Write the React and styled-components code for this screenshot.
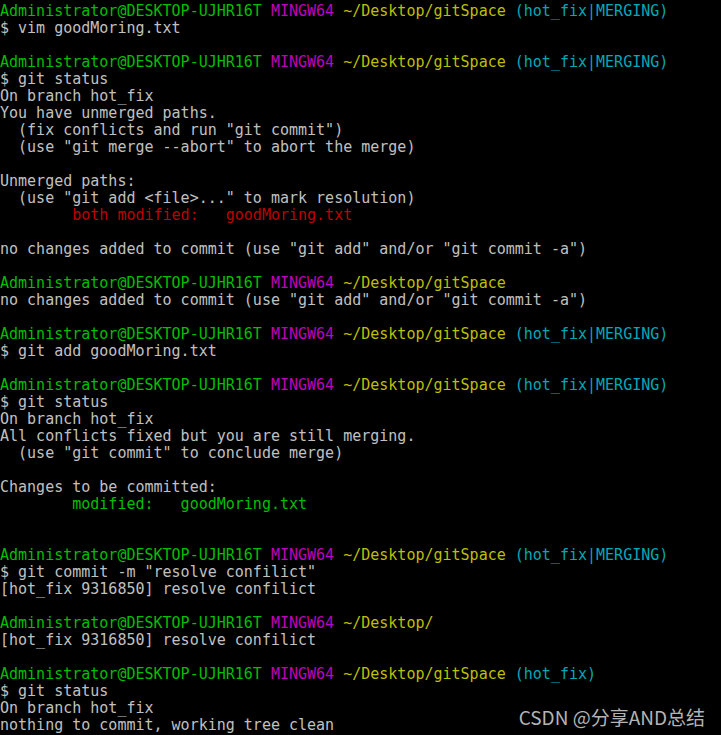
import React from 'react'
import styled, { createGlobalStyle } from 'styled-components'

const GlobalStyle = createGlobalStyle`
    html, body {
        margin: 0;
        padding: 0;
        background: #000;
    }
`

const COLORS = {
    text: '#c0c0c0',
    green: '#00bf00',
    magenta: '#bf00bf',
    yellow: '#bfbf00',
    cyan: '#00a8b8',
    red: '#bf0000',
}

const Terminal = styled.main`
    position: relative;
    width: 721px;
    height: 735px;
    overflow: hidden;
    box-sizing: border-box;
    padding: 3px 0 0 0;
    background: #000;
    font-family: "DejaVu Sans Mono", "Liberation Mono", monospace;
    font-size: 15px;
    color: ${COLORS.text};
`

const Line = styled.div`
    height: 17px;
    line-height: 17px;
    white-space: pre;
`

const Seg = styled.span`
    color: ${(p) => COLORS[p.$tone] || COLORS.text};
`

const Watermark = styled.div`
    position: absolute;
    right: 16px;
    bottom: 7px;
    font-family: "Noto Sans CJK SC", "Noto Sans", sans-serif;
    font-size: 19px;
    line-height: 22px;
    color: #b4b4b4;
`

const prompt = (path, branch) => {
    const segs = [
        ['Administrator@DESKTOP-UJHR16T ', 'green'],
        ['MINGW64 ', 'magenta'],
        [path, 'yellow'],
    ]
    if (branch) segs.push([' ' + branch, 'cyan'])
    return segs
}

const merging = () => prompt('~/Desktop/gitSpace', '(hot_fix|MERGING)')

const lines = [
    merging(),
    '$ vim goodMoring.txt',
    '',
    merging(),
    '$ git status',
    'On branch hot_fix',
    'You have unmerged paths.',
    '  (fix conflicts and run "git commit")',
    '  (use "git merge --abort" to abort the merge)',
    '',
    'Unmerged paths:',
    '  (use "git add <file>..." to mark resolution)',
    [['        both modified:   goodMoring.txt', 'red']],
    '',
    'no changes added to commit (use "git add" and/or "git commit -a")',
    '',
    prompt('~/Desktop/gitSpace'),
    'no changes added to commit (use "git add" and/or "git commit -a")',
    '',
    merging(),
    '$ git add goodMoring.txt',
    '',
    merging(),
    '$ git status',
    'On branch hot_fix',
    'All conflicts fixed but you are still merging.',
    '  (use "git commit" to conclude merge)',
    '',
    'Changes to be committed:',
    [['        modified:   goodMoring.txt', 'green']],
    '',
    '',
    merging(),
    '$ git commit -m "resolve confilict"',
    '[hot_fix 9316850] resolve confilict',
    '',
    prompt('~/Desktop/'),
    '[hot_fix 9316850] resolve confilict',
    '',
    prompt('~/Desktop/gitSpace', '(hot_fix)'),
    '$ git status',
    'On branch hot_fix',
    'nothing to commit, working tree clean',
]

export default function App() {
    return (
        <>
            <GlobalStyle />
            <Terminal>
                {lines.map((line, i) => (
                    <Line key={i}>
                        {typeof line === 'string'
                            ? line || ' '
                            : line.map(([text, tone], j) => (
                                  <Seg key={j} $tone={tone}>{text}</Seg>
                              ))}
                    </Line>
                ))}
                <Watermark>CSDN @分享AND总结</Watermark>
            </Terminal>
        </>
    )
}
